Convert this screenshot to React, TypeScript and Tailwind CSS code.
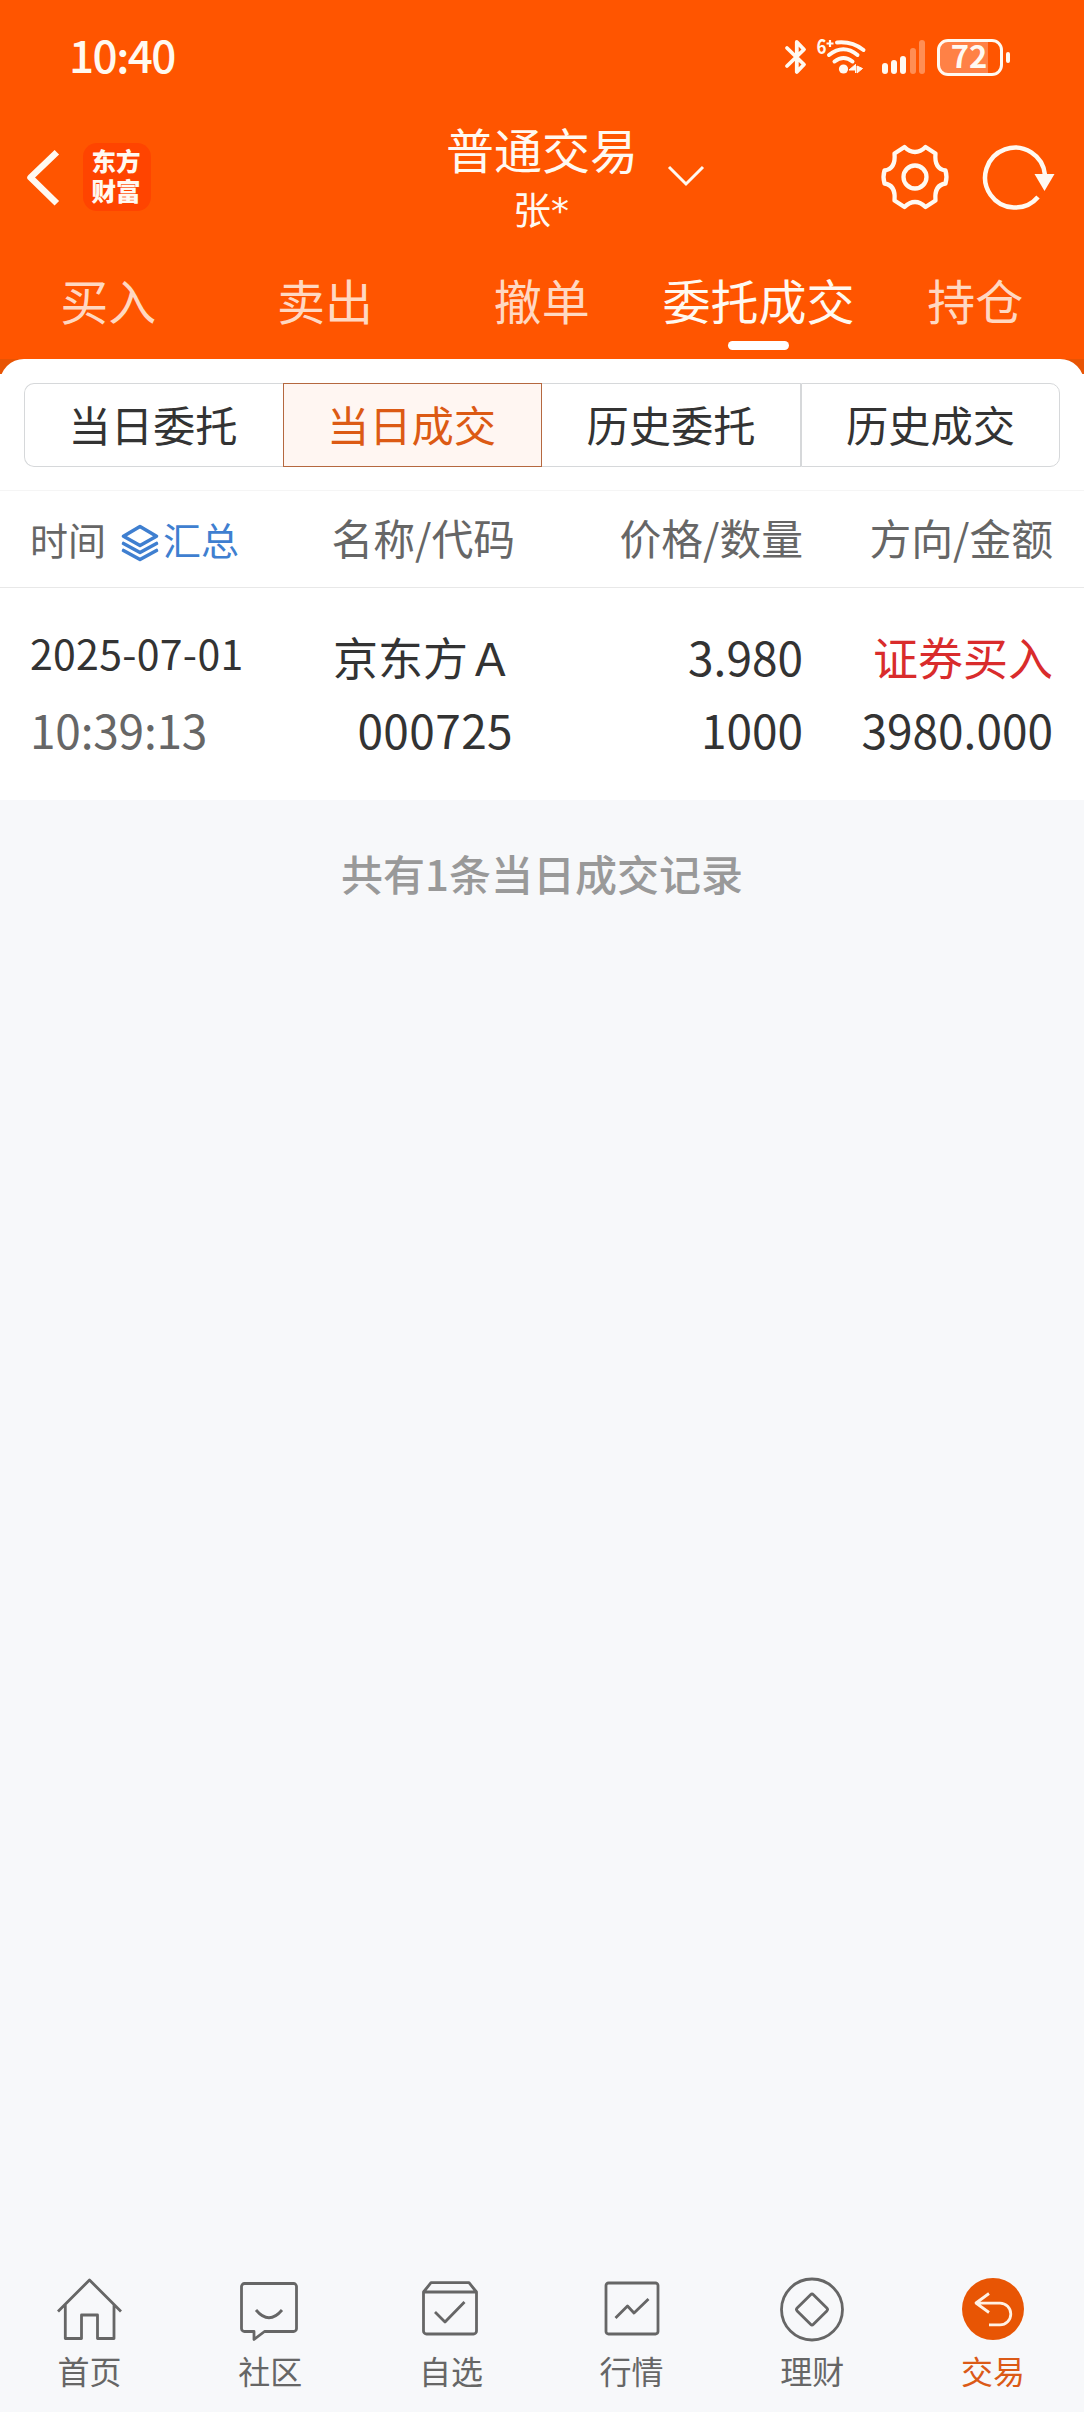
import type { ReactNode } from "react";

function StatusBar() {
  return (
    <div className="flex h-[114px] items-center">
      <span className="-mt-[6px] ml-[69px] w-[110px] text-[44px] leading-[60px] font-medium tracking-[-1.500px]">10:40</span>
      {/* Bluetooth */}
      <svg className="ml-[604px] h-[38px] w-[26px]" viewBox="783 37 26 38" fill="none" stroke="currentColor" strokeWidth="3.8" strokeLinecap="round" strokeLinejoin="round">
        <path d="M787 47 804 63.5 796.8 71V41L804 48.5 787 65" />
      </svg>
      {/* Wi-Fi */}
      <svg className="ml-[7px] h-[38px] w-[52px] overflow-visible" viewBox="816 37 52 38" fill="none" stroke="currentColor">
        <text x="816.5" y="53" fill="currentColor" stroke="none" fontSize="20" fontWeight="700" textLength="10" lengthAdjust="spacingAndGlyphs">6</text>
        <path d="M826.5 42.5h7M830 39v7" strokeWidth="2.2" />
        <path d="M837 41.5q15-1.5 26.500 7.500M829 54q14.500-11.500 28.500 0M834.500 60.500q9-7 18 0" strokeWidth="4" strokeLinecap="round" />
        <circle cx="843.500" cy="68" r="4.600" fill="currentColor" stroke="none" />
        <path d="m855.500 63.500-6.500 5.500h6.500zm0 0v8.500M857 65l5.500 2.500-5.500 4.500z" fill="currentColor" strokeWidth="1" />
      </svg>
      {/* Mobile signal */}
      <div className="ml-[14px] flex h-[34px] items-end gap-[3.2px]">
        <i className="h-[11px] w-[6px] rounded-full bg-current" />
        <i className="h-[14px] w-[6px] rounded-full bg-current" />
        <i className="h-[18px] w-[6px] rounded-full bg-current" />
        <i className="h-[26px] w-[6px] rounded-full bg-current opacity-35" />
        <i className="h-[34px] w-[6px] rounded-full bg-current opacity-35" />
      </div>
      {/* Battery */}
      <div className="ml-[12px] flex h-[37px] w-[66px] items-center rounded-[11px] border-[3px] border-current bg-[linear-gradient(90deg,#ff8146_80%,transparent_80%)]">
        <span className="-mt-[6px] ml-[11px] text-[31px] leading-[45px] font-bold">72</span>
      </div>
      <i className="ml-[3px] h-[11px] w-[4px] rounded-full bg-current" />
    </div>
  );
}

function TitleBar() {
  return (
    <div className="grid h-[126px] grid-cols-[446px_192px_446px]">
      <div className="flex items-center">
        <svg className="ml-[24px] h-[60px] w-[38px]" viewBox="24 147 38 60" fill="none" stroke="currentColor" strokeWidth="6.500" strokeLinejoin="round" strokeLinecap="square">
          <path d="M54.500 154.500 30.500 177.500 54.500 201" />
        </svg>
        <div className="ml-[21px] flex h-[68px] w-[68px] flex-col items-center rounded-[14px] bg-[#ff4400] pt-[3px] pr-[2px] text-[24.500px] leading-[29.500px] font-black">
          <span>东方</span>
          <span>财富</span>
        </div>
      </div>
      <div className="flex flex-col items-center whitespace-nowrap">
        <h1 className="mt-[10px] text-[48px] leading-[48px]">普通交易</h1>
        <span className="mt-[16px] flex pr-[2px] text-[38px] leading-[40px]">
          张<span className="mt-[3px] font-['DejaVu_Sans',sans-serif] text-[36px]">*</span>
        </span>
      </div>
      <div className="flex items-center">
        <svg className="mt-[-2px] ml-[28px] h-[24px] w-[40px]" viewBox="666 165 40 24" fill="none" stroke="currentColor" strokeWidth="3">
          <path d="m669 168 17 17 17-17" />
        </svg>
        <svg className="ml-[173px] h-[70px] w-[72px]" viewBox="878.500 142 72 70" fill="none" stroke="currentColor" strokeWidth="4.300" strokeLinejoin="round">
          <circle cx="914.500" cy="177" r="11.500" />
          <path d="M904 147Q909 152 914.500 152T925 147L935 153.500C934 164 938 169.500 945 170.500Q947 177 945 183.500C938 184.500 934 190 935 200.500L925 207Q920 202 914.500 202T904 207L894 200.500C895 190 891 184.500 884 183.500Q882 177 884 170.500C891 169.500 895 164 894 153.500Z" />
        </svg>
        <svg className="ml-[29px] h-[70px] w-[78px]" viewBox="979.500 142 78 70" fill="none" stroke="currentColor" strokeWidth="4.500">
          <path d="M1037.500 197A30 30 0 1 1 1044.500 175" />
          <path d="M1034 174H1054L1044 191Z" fill="currentColor" stroke="none" />
        </svg>
      </div>
    </div>
  );
}

const tabs = ["买入", "卖出", "撤单", "委托成交", "持仓"];

function Tabs() {
  return (
    <nav className="grid h-[119px] grid-cols-5">
      {tabs.map((tab) => {
        const active = tab === "委托成交";
        return (
          <div key={tab} className="flex flex-col items-center whitespace-nowrap">
            <span className={`mt-[35px] pr-[0.500px] text-[48px] leading-[48px] ${active ? "" : "text-[#ffd8c2]"}`}>{tab}</span>
            {active && <i className="mt-[18px] h-[9px] w-[61px] rounded-full bg-white" />}
          </div>
        );
      })}
    </nav>
  );
}

function Segments() {
  const base = "flex items-center justify-center pb-[3px] text-[42.300px] leading-[60px] border";
  return (
    <div className="mx-[24px] mt-[9px] grid h-[84px] grid-cols-4 text-[#333]">
      <div className={`${base} rounded-l-[10px] border-[#d6d8da] border-r-0 pr-[2px]`}>当日委托</div>
      <div className={`${base} border-[#b5683f] bg-[#fff6f2] pr-[2px] text-[#dc5a14]`}>当日成交</div>
      <div className={`${base} border-[#d6d8da] border-l-0`}>历史委托</div>
      <div className={`${base} rounded-r-[10px] border-[#d6d8da]`}>历史成交</div>
    </div>
  );
}

function Orders() {
  const columns = "grid grid-cols-[271px_214px_288px_250px] pl-[30px]";
  return (
    <section>
      <div className={`${columns} mt-[23px] h-[98px] items-center border-y border-t-[#f5f5f5] border-b-[#e8e8e8] text-right text-[41.800px] leading-[60px] text-[#666]`}>
        <div className="flex items-center text-[38px]">
          <span>时间</span>
          <svg className="mt-[8px] ml-[15px] h-[38px] w-[38px]" viewBox="0 0 38 38" fill="none" stroke="#3f7fd0" strokeWidth="3.600" strokeLinejoin="round" strokeLinecap="round">
            <path d="M19 2.500 35.500 12.200 19 21.500 2.500 12.200ZM2.500 19.500 19 28.500 35.500 19.500M2.500 26.500 19 35.500 35.500 26.500" />
          </svg>
          <span className="ml-[4px] text-[#3f7fd0]">汇总</span>
        </div>
        <span className="-mt-[4px]">名称/代码</span>
        <span className="-mt-[4px]">价格/数量</span>
        <span className="-mt-[4px]">方向/金额</span>
      </div>
      <div className={`${columns} h-[212px] pt-[32px] text-right text-[46px] leading-[73px] text-[#333]`}>
        <div className="flex flex-col text-left">
          <span className="-mt-[4px] mb-[4px] text-[41px] tracking-[0.300px]">2025-07-01</span>
          <span className="tracking-[-0.200px] text-[#666]">10:39:13</span>
        </div>
        <div className="flex flex-col">
          <span className="pr-[2px] text-[45px]">京东方Ａ</span>
          <span className="pr-[2px] tracking-[0.400px]">000725</span>
        </div>
        <div className="flex flex-col">
          <span>3.980</span>
          <span>1000</span>
        </div>
        <div className="flex flex-col">
          <span className="text-[45px] text-[#d92c2c]">证券买入</span>
          <span>3980.000</span>
        </div>
      </div>
    </section>
  );
}

/* Icon coordinates: x is measured from the centre of the nav column. */
const navItems: { label: string; active?: boolean; icon: ReactNode }[] = [
  {
    label: "首页",
    icon: <path d="M-32-14.500-.5 -46 31-14.500M-24.700-21V12.500H-8.500V-11H7.500V12.500H24V-21" transform="translate(0 53)" />,
  },
  {
    label: "社区",
    icon: <path d="M-25.500 10.500h49a3 3 0 0 1 3 3v42a3 3 0 0 1-3 3h-29L-16 66.500v-8h-9.500a3 3 0 0 1-3-3v-42a3 3 0 0 1 3-3ZM-14 37q13 15.500 26 0" />,
  },
  {
    label: "自选",
    icon: <path d="M-27.500 19-20 9.700H18L25.500 19V58a3 3 0 0 1-3 3h-47a3 3 0 0 1-3-3ZM-27.500 19H25.500M-16 39-6 49 13.500 29" />,
  },
  {
    label: "行情",
    icon: <path d="M-23.500 10h47a2.500 2.500 0 0 1 2.500 2.500v46a2.500 2.500 0 0 1-2.500 2.500h-47a2.500 2.500 0 0 1-2.500-2.500v-46a2.500 2.500 0 0 1 2.500-2.500ZM-16.500 45-4.500 33 2 40 16.500 26" />,
  },
  {
    label: "理财",
    icon: (
      <>
        <circle cx="0" cy="36.500" r="30.500" />
        <rect x="-11.500" y="-11.500" width="23" height="23" rx="2" transform="translate(0 36.500) rotate(45)" />
      </>
    ),
  },
  {
    label: "交易",
    active: true,
    icon: (
      <>
        <circle cx="0" cy="36" r="31" fill="#e85504" stroke="none" />
        <path d="M-4 20.500-17 30-4 39.500M-17 30.200H7a10.800 10.800 0 0 1 0 21.600H-4" stroke="#fff1e4" />
      </>
    ),
  },
];

function BottomNav() {
  return (
    <nav className="grid h-[139px] grid-cols-6">
      {navItems.map((item) => (
        <div key={item.label} className={`flex flex-col items-center pr-[1.500px] ${item.active ? "text-[#db5a17]" : "text-[#666]"}`}>
          <svg className="h-[72px] w-[72px]" viewBox="-36 0 72 72" fill="none" stroke="currentColor" strokeWidth="2.800" strokeLinejoin="round">
            {item.icon}
          </svg>
          <span className="mt-[5px] text-[32px] leading-[40px]">{item.label}</span>
        </div>
      ))}
    </nav>
  );
}

export default function App() {
  return (
    <div lang="zh-CN" className="flex h-[2412px] w-[1084px] flex-col overflow-hidden bg-[#f7f8fa] font-['Noto_Sans_CJK_SC',sans-serif]">
      <header className="h-[359px] bg-[#ff5500] text-[#fff9f1]">
        <StatusBar />
        <TitleBar />
        <Tabs />
      </header>
      <main className="h-[441px] bg-white">
        <div className="h-[15px] overflow-hidden bg-[#e85404]">
          <div className="h-[60px] rounded-t-[24px] bg-white" />
        </div>
        <Segments />
        <Orders />
      </main>
      <p className="mt-[43px] text-center text-[42px] leading-[60px] font-medium text-[#999]">共有1条当日成交记录</p>
      <div className="flex-1" />
      <BottomNav />
    </div>
  );
}
